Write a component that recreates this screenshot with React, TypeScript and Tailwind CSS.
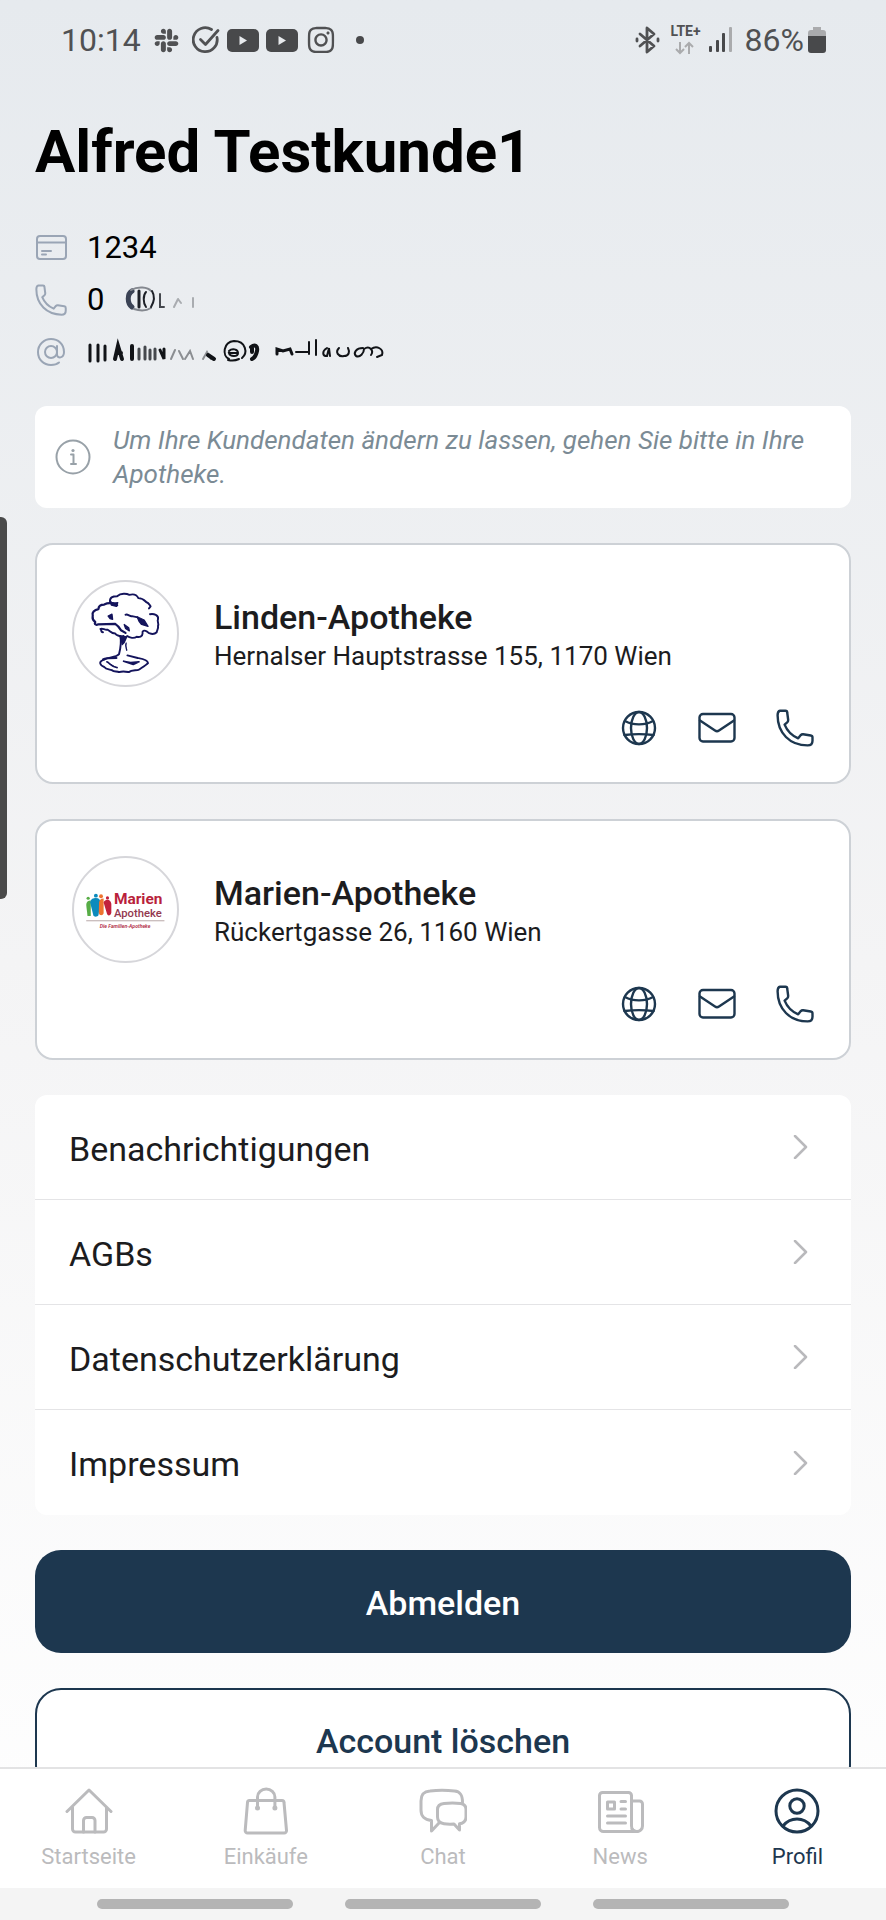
import type { ReactNode } from 'react'
import { FaSlack, FaInstagram } from 'react-icons/fa'

const pharmacies = [
  { name: 'Linden-Apotheke', address: 'Hernalser Hauptstrasse 155, 1170 Wien', logo: <LindenLogo /> },
  { name: 'Marien-Apotheke', address: 'Rückertgasse 26, 1160 Wien', logo: <MarienLogo /> },
]

const links = ['Benachrichtigungen', 'AGBs', 'Datenschutzerklärung', 'Impressum']

const tabs = [
  { label: 'Startseite', icon: <HomeIcon /> },
  { label: 'Einkäufe', icon: <BagIcon /> },
  { label: 'Chat', icon: <ChatIcon /> },
  { label: 'News', icon: <NewsIcon /> },
  { label: 'Profil', icon: <ProfileIcon />, active: true },
]

// --- ICONS ---
function Icon({ size = 48, width = 3, className, children }: { size?: number; width?: number; className: string; children: ReactNode }) {
  return (
    <svg
      viewBox={`0 0 ${size} ${size}`} className={className} aria-hidden="true"
      fill="none" stroke="currentColor" strokeWidth={width} strokeLinecap="round" strokeLinejoin="round"
    >
      {children}
    </svg>
  )
}

function HomeIcon() {
  return (
    <Icon className="size-12">
      <path d="M2 24.5 24 3l22 21.5M7.500 20v22a3 3 0 0 0 3 3h28a3 3 0 0 0 3-3V20" />
      <path d="M18.500 45V33.500a3 3 0 0 1 3-3h5.500a3 3 0 0 1 3 3V45" />
    </Icon>
  )
}

function BagIcon() {
  return (
    <Icon className="size-12">
      <path d="M7.500 13.500h32.500a2 2 0 0 1 2 2l2.500 28a2.300 2.300 0 0 1-2.300 2.500H5.500a2.300 2.300 0 0 1-2.300-2.500l2.300-28a2 2 0 0 1 2-2z" />
      <path d="M15.500 21V10a8.700 8 0 0 1 17.400 0v11" />
      <circle cx="15.500" cy="21" r="2.500" fill="currentColor" stroke="none" />
      <circle cx="32.900" cy="21" r="2.500" fill="currentColor" stroke="none" />
    </Icon>
  )
}

function ChatIcon() {
  return (
    <Icon className="size-12">
      <path d="M43.500 15.500c0-7.500-2-11-8-11.500-8-.8-17-.8-24.500 0C4.500 4.500 2 7.500 2 14v9c0 6.500 3 9.500 10.500 10.500V44l7.500-8" />
      <path d="M25 16.500c5-.5 12-.5 16.500 0 4 .5 5.500 2.500 5.500 6V30c0 4-2 6-6.500 6.800V43L35 37c-4 .3-7 .2-10-.3-4.500-.7-6.500-2.700-6.500-6.700v-7.500c0-3.500 2-5.500 6.500-6z" />
    </Icon>
  )
}

function NewsIcon() {
  return (
    <Icon className="size-12">
      <path d="M42 44.500H7.500A4 4 0 0 1 3.500 40.500V8.500a3 3 0 0 1 3-3h26a3 3 0 0 1 3 3V39a5.500 5.500 0 0 0 11 0V17a3 3 0 0 0-3-3h-8" />
      <path d="M36 42a5 5 0 0 0 5 2.500" />
      <rect x="11.500" y="15" width="7" height="7" />
      <path d="M25 14.500h4.500M25 22h4.500M11.500 29h18M11.500 36h18" />
    </Icon>
  )
}

function ProfileIcon() {
  return (
    <Icon className="size-12">
      <circle cx="24" cy="24" r="21" />
      <circle cx="24" cy="19" r="7.200" />
      <path d="M10 39c3.500-4.500 8.500-7 14-7s10.500 2.500 14 7" />
    </Icon>
  )
}

function PhoneIcon({ className }: { className: string }) {
  return (
    <Icon size={38} width={2.4} className={className}>
      <path d="M4 1.800h5.500c1 0 1.700.7 1.700 1.700l1 7.500c0 1-.3 1.600-1 2.300L8.600 15.600c2.600 6.400 7.200 11 13.600 13.700l2.600-3.200c.6-.7 1.300-1 2.300-.9l7.700 1.300c1.100.2 1.700.9 1.700 1.900v3.300c0 2.700-1.800 4.700-4.900 4.700C13.800 36.400 1.600 24 1.600 6.300c0-2.500.9-4.200 2.400-4.500z" />
    </Icon>
  )
}

function GlobeIcon() {
  return (
    <Icon size={38} width={2.4} className="size-[38px]">
      <circle cx="19" cy="19" r="16" />
      <ellipse cx="19" cy="19" rx="8" ry="16" />
      <path d="M5 12c8 4.500 20 4.500 28 0M4.500 26c8.500-1 20.500-1 29 0" />
    </Icon>
  )
}

function MailIcon() {
  return (
    <Icon size={38} width={2.4} className="size-[38px]">
      <rect x="1.500" y="5" width="35" height="27.500" rx="3.500" />
      <path d="m2 11.500 15 10a3.500 3.500 0 0 0 4 0L36 11.500" />
    </Icon>
  )
}

function CardIcon() {
  return (
    <Icon size={32} width={2} className="size-8">
      <rect x="2" y="4" width="29" height="23" rx="3" />
      <path d="M2 10.500h29M7 19h9M7 22.500h4" />
    </Icon>
  )
}

function AtIcon() {
  return (
    <Icon size={32} width={2} className="size-8">
      <circle cx="16" cy="16" r="6" />
      <path d="M22 10v8.500c0 4.500 7 4 7-2.500C29 8 23 3 16 3S3 8.500 3 16s5.500 13 13 13c3.500 0 6-.8 8-2.500" />
    </Icon>
  )
}

function InfoIcon() {
  return (
    <Icon size={36} width={2} className="size-9 shrink-0 text-[#98a1a8]">
      <circle cx="18" cy="18" r="16.500" />
      <path d="M16 15.500h2.500V25M16 25h5" />
      <circle cx="18" cy="11.500" r="1.600" fill="currentColor" stroke="none" />
    </Icon>
  )
}

// --- LOGOS ---
function LindenLogo() {
  return (
    <svg viewBox="0 0 320 320" className="size-full" role="img" aria-label="Linden-Apotheke" fill="none" stroke="#14145c" strokeWidth="6" strokeLinecap="round" strokeLinejoin="round">
      <path d="M112 62c-2-14 8-18 22-18 12-10 30-8 38-4 14-4 24 2 28 10 14 0 20 8 24 12 8 2 10 8 14 14l-5 6" />
      <path d="M134 72c-16-8-32-6-40-2-14 0-18 8-18 14-14 2-20 12-18 18 2 6-6 12 8 22-4 8 4 10 8 8l54-2c6 4 14 12 18 20l14 8" strokeWidth="7" />
      <path d="M112 58c4 8 14 8 24 6l-4 12-16-4z" fill="#14145c" strokeWidth="4" />
      <path d="M236 100c12-2 28 2 25 16-4 6 4 14 0 20 2 10-4 14-4 20-10 10-26 4-30-2-10-6-16-2-14 6 0 10-10 12-18 10-8 6-22 4-30-2" />
      <path d="M82 146c6-4 14 4 22 2 8 4 12 12 24 12 6 10 18 8 26 8" />
      <path d="M84 146c0 6 2 10 6 10M160 102c6-4 14 6 20 4l18 4" />
      <path d="m106 106 12-6 2 16-8-2zM196 108l22 10 12 20-20-6-8-10zM156 132l14 10 2 10-12-8z" fill="#14145c" strokeWidth="4" />
      <path d="M144 168c4 20 0 40-4 56-10 12-34 8-48 18-18 6-10 18 2 22 6 8 14 6 24 10 6 6 16 2 22 6 12-4 20-2 30 0 10-8 24-4 32-8 12-8 22-14 28-20-2-12-20-14-32-16l-32-8" />
      <path d="m144 170 20 0-8 18-6 6zM162 190c-4 8 0 14 2 22" fill="#14145c" strokeWidth="4" />
      <path d="M102 248c10 4 14 16 32 18M154 246l22 4 26-2-18 8z" fill="#14145c" strokeWidth="5" />
      <path d="M90 240c8-4 30-4 42-4" />
    </svg>
  )
}

function MarienLogo() {
  return (
    <svg viewBox="0 0 320 320" className="size-full" role="img" aria-label="Marien-Apotheke">
      <g fill="#57ad46"><circle cx="44" cy="125" r="5" /><path d="M38 146c0-10 6-14 14-14v48H42z" /></g>
      <g fill="#0c8bbd"><circle cx="68" cy="117" r="6" /><path d="M50 138c2-12 10-14 18-14 10 0 14 6 14 16l-6 38c-4 6-14 6-16 0z" /></g>
      <g fill="#ee7430"><circle cx="84" cy="119" r="6" /><path d="M78 138c2-10 8-12 14-12v46c-2 8-14 8-15-2z" /></g>
      <g fill="#c2213d"><circle cx="104" cy="124" r="5" /><path d="M92 138c4-12 22-12 24 4v28c-2 10-12 12-14 2z" /></g>
      <text x="124" y="144" className="font-[Roboto] text-[48px] font-bold" fill="#b91f3c">Marien</text>
      <text x="124" y="183" className="font-[Roboto] text-[35px] font-medium" fill="#93384f">Apotheke</text>
      <path d="M38 195h243" stroke="#b5a5a5" strokeWidth="3" />
      <text x="80" y="216" className="font-[Roboto] text-[16px] font-semibold italic" fill="#b02a45">Die Familien-Apotheke</text>
    </svg>
  )
}

// --- STATUS BAR ---
function StatusBar() {
  return (
    <header className="flex h-20 shrink-0 items-center justify-between pr-[60px] pl-[61px] text-[32px] text-[#505153]">
      <div className="flex items-center">
        <span>10:14</span>
        <FaSlack className="ml-3 size-[27px]" />
        <Icon size={28} width={2.8} className="ml-3 size-7">
          <path d="M25 11.500A12 12 0 1 1 19.500 3.500" />
          <path d="m8.500 13.500 5 5L26 4.500" />
        </Icon>
        <YoutubeIcon />
        <YoutubeIcon />
        <FaInstagram className="ml-2 size-[30px]" />
        <span className="ml-5 size-2 rounded-full bg-[#48494b]" />
      </div>
      <div className="flex items-center">
        <Icon size={28} width={2.8} className="size-7">
          <path d="m6 8 14 12-7 6V2l7 6L6 20M3 13v2M24 13v2" />
        </Icon>
        <div className="ml-2 flex flex-col items-center">
          <span className="text-[14px] leading-3 font-bold">LTE+</span>
          <svg viewBox="0 0 20 14" className="mt-1 h-3.5 w-5 text-[#aaabad]" fill="none" stroke="currentColor" strokeWidth="2" aria-hidden="true">
            <path d="M5 1v11M1 8l4 4 4-4M14 13V2M10 6l4-4 4 4" />
          </svg>
        </div>
        <svg viewBox="0 0 24 26" className="ml-2 h-[26px] w-6" fill="#48494b" aria-hidden="true">
          <rect x="0" y="19" width="3" height="6" rx="1" />
          <rect x="7" y="13" width="3" height="12" rx="1" />
          <rect x="13" y="6" width="3" height="19" rx="1" />
          <rect x="20" y="0" width="3" height="25" rx="1" fill="#aaabad" />
        </svg>
        <span className="ml-3">86%</span>
        <svg viewBox="0 0 18 28" className="ml-1 h-7 w-[18px]" aria-hidden="true">
          <path d="M5 1h8v3h2a3 3 0 0 1 3 3v4H0V7a3 3 0 0 1 3-3h2z" fill="#aaabad" />
          <path d="M0 10h18v14a3 3 0 0 1-3 3H3a3 3 0 0 1-3-3z" fill="#48494b" />
        </svg>
      </div>
    </header>
  )
}

function YoutubeIcon() {
  return (
    <svg viewBox="0 0 32 24" className="ml-[7px] h-6 w-8" aria-hidden="true">
      <rect width="32" height="23" y="1" rx="5" fill="#48494b" />
      <path d="m12.500 8 7.500 4.500-7.500 4.500z" fill="#e7eaed" />
    </svg>
  )
}

// Unkenntlich gemachte Kontaktdaten
function PhoneSmudge() {
  return (
    <svg viewBox="0 0 76 30" className="h-[30px] w-[76px]" fill="none" stroke="#1d2027" strokeLinecap="round" role="img" aria-label="Telefonnummer verborgen">
      <path d="M8 6C3 9 3 18 8 22" strokeWidth="5" stroke="#3b4355" />
      <path d="M7 5c7-4 17-3 20 1M10 24c6 2 12 2 17-1" strokeWidth="2" stroke="#84888f" />
      <path d="M15 6v16" strokeWidth="3" />
      <path d="M22 7c-3 3-3 11 0 15M28 6c3 5 2 11-1 16" strokeWidth="2" />
      <path d="M36 9v13h4" strokeWidth="2" stroke="#44474d" />
      <path d="m50 22 4-8M54 14l3 4M69 13v9" strokeWidth="2" stroke="#a9acb0" />
    </svg>
  )
}

function MailSmudge() {
  return (
    <svg viewBox="0 0 302 30" className="h-[30px] w-[302px]" fill="none" stroke="#111317" strokeLinecap="round" role="img" aria-label="E-Mail-Adresse verborgen">
      <path d="M3 8v16M11 8v16M18 9v14" strokeWidth="3" />
      <path d="m28 22 3-13 4 13M30 16h4M45 9v13" strokeWidth="4" />
      <path d="M52 12v10M58 10v12M63 13v9M68 12v10" strokeWidth="3" stroke="#45484d" />
      <path d="m73 13 4 9V12" strokeWidth="3" />
      <path d="m84 22 4-9M92 14l4 8M98 22l5-8 3 8M116 22l4-7 4 7" strokeWidth="2" stroke="#8b8e92" />
      <path d="m121 18 6 4" strokeWidth="4" />
      <path d="M142 22c-7-3-6-17 5-18 12 0 14 12 8 17" strokeWidth="2" />
      <path d="M142 14c3-3 9-2 9 2s-8 4-9 0h9M141 23c4 1 7 1 11-1" strokeWidth="2" />
      <path d="M164 10c4-3 7-1 6 4s-3 7-5 8M165 11v4" strokeWidth="4" />
      <path d="M190 17v-5l6 2 7-2 2 5" strokeWidth="3" />
      <path d="M209 15h12M222 17V5M229 3v15" strokeWidth="2" />
      <path d="M240 11c-5 3-5 8 0 8l2-8 1 8M252 11c-4 4-1 9 5 8 5 0 6-4 4-8" strokeWidth="2" />
      <path d="M276 11c-7 0-10 5-7 8 4 2 8-3 8-7 6-4 10 2 7 6M284 12c6-4 13 0 11 6l-5 2" strokeWidth="2" />
    </svg>
  )
}

export default function App() {
  return (
    <div className="relative flex h-screen flex-col overflow-hidden bg-linear-to-b from-[#e6eaee] via-[#f4f4f5] to-white font-[Roboto,sans-serif] text-[#1c1c1e]">
      <StatusBar />

      {/* Griff vom Seitenpanel */}
      <div className="absolute top-[517px] left-0 h-[382px] w-[7px] rounded-r-md bg-[#4a4a4a]" />

      <main className="min-h-0 flex-1 overflow-y-auto px-[35px] pt-9 pb-9 [scrollbar-width:none]">
        <h1 className="text-[60px] leading-[72px] font-bold text-black">Alfred Testkunde1</h1>

        <ul className="mt-[34px] text-[31px] text-black">
          <li className="flex h-[52px] items-center gap-5">
            <span className="text-[#9aa5b5]"><CardIcon /></span>
            <span>1234</span>
          </li>
          <li className="flex h-[52px] items-center gap-5">
            <PhoneIcon className="size-8 text-[#9aa5b5]" />
            <span>0</span>
            <PhoneSmudge />
          </li>
          <li className="flex h-[52px] items-center gap-5">
            <span className="text-[#9aa5b5]"><AtIcon /></span>
            <MailSmudge />
          </li>
        </ul>

        <div className="mt-7 flex flex-col gap-[35px]">
          <div className="flex items-center gap-[22px] rounded-xl bg-white px-5 py-[17px]">
            <InfoIcon />
            <p className="text-[26px] leading-[34px] text-[#7b8b95] italic">
              Um Ihre Kundendaten ändern zu lassen, gehen Sie bitte in Ihre Apotheke.
            </p>
          </div>

          {pharmacies.map(pharmacy => (
            <section key={pharmacy.name} className="flex gap-[35px] rounded-[18px] border-2 border-[#cdd1d6] bg-white p-[35px]">
              <div className="size-[107px] shrink-0 overflow-hidden rounded-full border-2 border-[#d6d6da]">
                {pharmacy.logo}
              </div>
              <div className="flex-1 pt-[15px]">
                <h2 className="text-[34px] leading-[44px] font-medium">{pharmacy.name}</h2>
                <p className="text-[26px] leading-[34px]">{pharmacy.address}</p>
                <div className="mt-9 flex justify-end gap-10 text-[#1d374f]">
                  <a href="#website" aria-label="Website"><GlobeIcon /></a>
                  <a href="#mail" aria-label="E-Mail"><MailIcon /></a>
                  <a href="#anruf" aria-label="Anrufen"><PhoneIcon className="size-[38px]" /></a>
                </div>
              </div>
            </section>
          ))}

          <nav className="divide-y divide-[#e4e4e6] rounded-xl bg-white">
            {links.map(link => (
              <a key={link} href="#" className="flex h-[105px] items-center justify-between pr-[39px] pl-[34px] text-[34px]">
                <span className="pt-1">{link}</span>
                <Icon size={24} width={2.5} className="size-6 text-[#b9b9bc]">
                  <path d="m7 1 11 11L7 23" />
                </Icon>
              </a>
            ))}
          </nav>

          <button type="button" className="h-[103px] rounded-[26px] bg-[#1d374f] pt-1 text-[34px] font-medium text-white">
            Abmelden
          </button>
          <button type="button" className="h-[103px] rounded-[26px] border-2 border-[#1d374f] bg-white pt-1 text-[34px] font-medium text-[#1d374f]">
            Account löschen
          </button>
        </div>
      </main>

      <nav className="grid shrink-0 grid-cols-5 border-t-2 border-[#e3e3e4] bg-white pt-[18px] pb-[17px]">
        {tabs.map(tab => (
          <a
            key={tab.label} href="#" aria-current={tab.active ? 'page' : undefined}
            className={tab.active ? 'flex flex-col items-center gap-2 text-[#1d374f]' : 'flex flex-col items-center gap-2 text-[#bbbbbd]'}
          >
            {tab.icon}
            <span className="text-[22px] leading-7">{tab.label}</span>
          </a>
        ))}
      </nav>

      {/* Gestenleiste */}
      <div className="flex h-8 shrink-0 items-center justify-center gap-[52px] bg-[#f4f4f4]">
        <span className="h-2.5 w-[196px] rounded-full bg-[#b4b4b4]" />
        <span className="h-2.5 w-[196px] rounded-full bg-[#b4b4b4]" />
        <span className="h-2.5 w-[196px] rounded-full bg-[#b4b4b4]" />
      </div>
    </div>
  )
}
